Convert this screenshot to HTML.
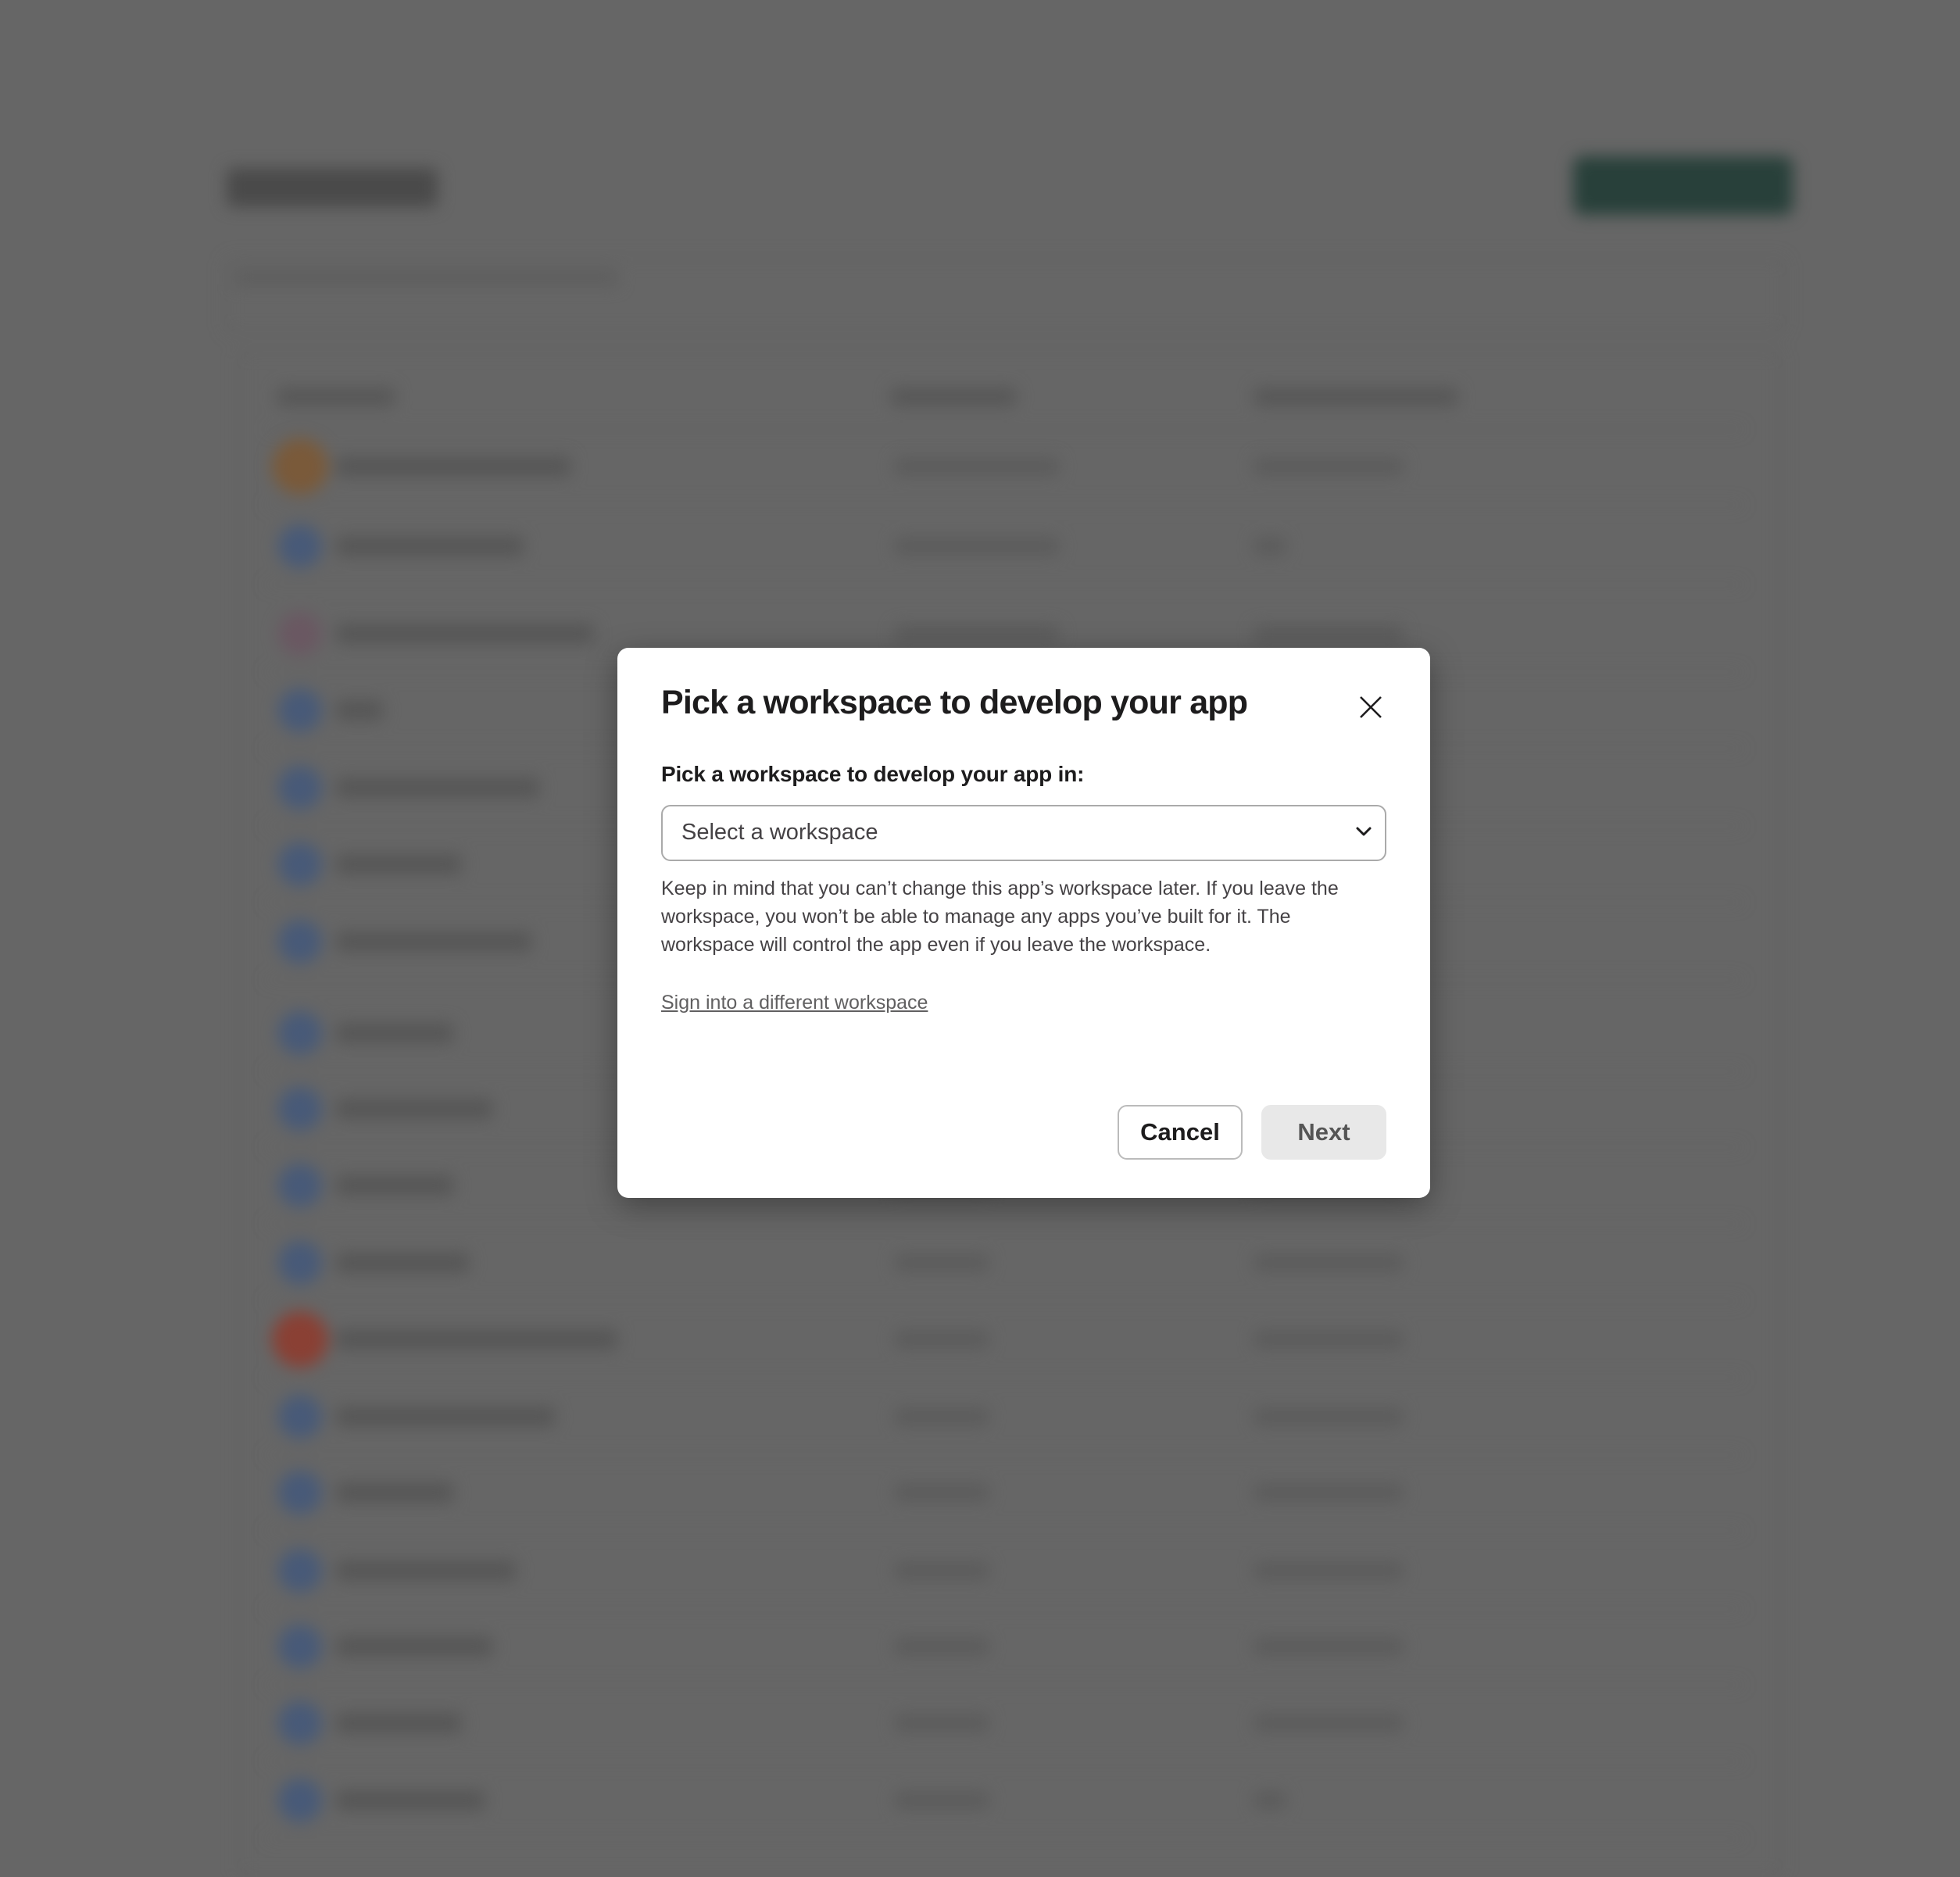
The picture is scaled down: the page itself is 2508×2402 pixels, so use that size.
<!DOCTYPE html>
<html><head><meta charset="utf-8"><style>
html,body{margin:0;padding:0}
body{width:2508px;height:2380px;background:#666;position:relative;overflow:hidden;font-family:"Liberation Sans",sans-serif}
#bg{position:absolute;inset:0;filter:blur(10px)}
#bg div{position:absolute}
.bar{background:#575757;height:24px;border-radius:6px}
.line{height:2px;background:#5f5f5f}
#modal{position:absolute;left:790px;top:829px;width:1040px;height:704px;background:#fff;border-radius:14px;box-shadow:0 10px 40px rgba(0,0,0,.35)}
#modal *{position:absolute;margin:0}
.t{left:56px;top:46px;font-size:43px;font-weight:bold;color:#1d1c1d;letter-spacing:-0.8px}
.lab{left:56px;top:146px;font-size:28px;font-weight:bold;color:#1d1c1d;letter-spacing:-0.2px}
.sel{left:56px;top:201px;width:924px;height:68px;border:2px solid #aaa;border-radius:12px}
.selt{left:82px;top:220px;font-size:29px;color:#454245}
.p{left:56px;top:290px;width:900px;font-size:25px;line-height:36px;color:#454245}
.a{left:56px;top:440px;font-size:25px;color:#616061;text-decoration:underline}
.btn{top:585px;height:68px;border-radius:12px;font-size:31px;font-weight:bold;display:flex;align-items:center;justify-content:center}
</style></head><body>
<div id="bg">
<div style="left:290px;top:215px;width:270px;height:50px;background:#4a4a4a;border-radius:8px"></div>
<div style="left:2013px;top:200px;width:281px;height:75px;background:#28403a;border-radius:12px"></div>
<div style="left:288px;top:330px;width:1992px;height:92px;border:2px solid #5f5f5f;border-radius:10px"></div>
<div style="left:300px;top:345px;width:490px;height:20px;background:#5e5e5e"></div>
<div style="left:305px;top:448px;width:1970px;height:1950px;border:2px solid #5f5f5f;border-radius:10px"></div>
<div class="bar" style="left:355px;top:496px;width:150px"></div>
<div class="bar" style="left:1140px;top:496px;width:160px"></div>
<div class="bar" style="left:1605px;top:496px;width:260px"></div>
<div class="line" style="left:340px;top:548px;width:1890px"></div>
</div>
<div id="bg2" style="position:absolute;inset:0;filter:blur(10px)"></div>
<script>
var ys=[373,437,507,568,630,691,753,826,887,948,1010,1071,1133,1194,1256,1317,1378,1440];
var bg=document.getElementById('bg2');var h='';
ys.forEach(function(y,i){var Y=Math.round(y*1.6);
var c='#485a78';if(i==0)c='#7a5a3a';if(i==2)c='#6a5862';if(i==11)c='#8a4034';
var s=(i==0||i==11)?72:56;
h+='<div style="position:absolute;left:'+(384-s/2)+'px;top:'+(Y-s/2)+'px;width:'+s+'px;height:'+s+'px;border-radius:50%;background:'+c+'"></div>';
var w=[300,240,330,60,260,160,250,150,200,150,170,360,280,150,230,200,160,190][i];
h+='<div style="position:absolute;left:430px;top:'+(Y-13)+'px;width:'+w+'px;height:26px;background:#565656;border-radius:6px"></div>';
h+='<div style="position:absolute;left:1145px;top:'+(Y-11)+'px;width:'+(i<3?210:120)+'px;height:22px;background:#5b5b5b;border-radius:6px"></div>';
h+='<div style="position:absolute;left:1605px;top:'+(Y-11)+'px;width:'+(i==1||i==17?40:190)+'px;height:22px;background:#5b5b5b;border-radius:6px"></div>';
h+='<div style="position:absolute;left:340px;top:'+(Y+48)+'px;width:1890px;height:2px;background:#626262"></div>';
});
bg.innerHTML=h;
</script>
<div id="modal">
<div class="t">Pick a workspace to develop your app</div>
<svg style="left:948px;top:60px" width="32" height="32" viewBox="0 0 32 32"><path d="M3 3L29 29M29 3L3 29" stroke="#1d1c1d" stroke-width="2.6" fill="none"/></svg>
<div class="lab">Pick a workspace to develop your app in:</div>
<div class="sel"></div>
<div class="selt">Select a workspace</div>
<svg style="left:944px;top:227px" width="22" height="16" viewBox="0 0 22 16"><path d="M3 4L11 12L19 4" stroke="#1d1c1d" stroke-width="3" fill="none" stroke-linecap="round" stroke-linejoin="round"/></svg>
<div class="p">Keep in mind that you can’t change this app’s workspace later. If you leave the workspace, you won’t be able to manage any apps you’ve built for it. The workspace will control the app even if you leave the workspace.</div>
<div class="a">Sign into a different workspace</div>
<div class="btn" style="left:640px;width:156px;height:66px;border:2px solid #bbb;color:#1d1c1d">Cancel</div>
<div class="btn" style="left:824px;width:160px;height:70px;background:#e8e8e8;color:#555">Next</div>
</div>
</body></html>
